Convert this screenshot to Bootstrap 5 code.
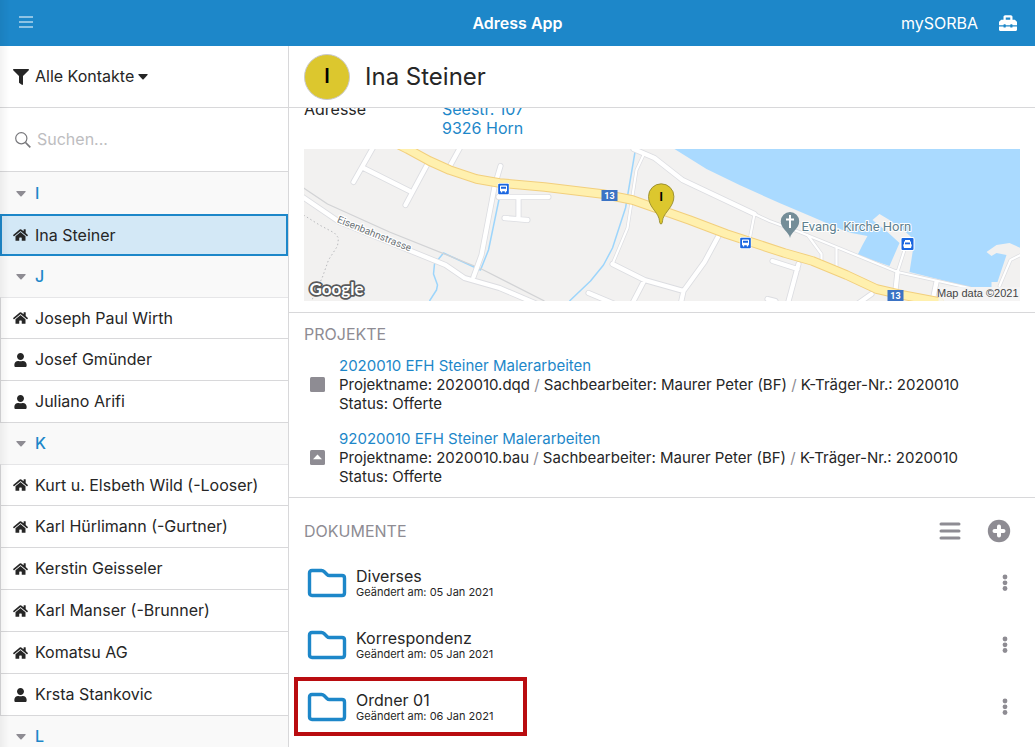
<!DOCTYPE html>
<html lang="de">
<head>
<meta charset="utf-8">
<meta name="viewport" content="width=device-width, initial-scale=1">
<title>Adress App</title>
<link href="https://cdn.jsdelivr.net/npm/bootstrap@5.3.0/dist/css/bootstrap.min.css" rel="stylesheet">
<style>
:root { --brand: #1d87c9; --ink: #262626; --muted: #8e8c93; --rule: #d8d8da; }
body { font-family: Inter, "Liberation Sans", sans-serif; font-size: 16px; line-height: 19px; color: var(--ink); background: #fff; }
a { color: var(--brand); text-decoration: none; }
svg { display: block; flex: none; }
button { color: inherit; }
.plain-btn { border: 0; background: none; padding: 0; }
.app-bar { height: 46px; background: var(--brand); color: #fff; padding: 0 17px; }
.app-bar h1 { font-size: 16px; line-height: 19px; font-weight: 600; }
.app-bar a { color: #fff; }
.app-side { flex: 1 1 0; }
.sidebar { flex: 0 0 289px; border-right: 1px solid var(--rule); }
.bar-row { height: 62px; border-bottom: 1px solid var(--rule); flex: none; }
.filter-row { padding: 0 13px; }
.filter-row button { gap: 6px; }
.filter-row svg { fill: var(--ink); }
.search-row { height: 64px; border-bottom: 1px solid var(--rule); padding: 0 15px; gap: 6px; flex: none; }
.search-row input { border: 0; padding: 0; font-size: 16px; line-height: 19px; box-shadow: none !important; background: none; }
.search-row input::placeholder { color: #bdbdc0; opacity: 1; }
.scroll { overflow-y: auto; scrollbar-width: none; }
.scroll::-webkit-scrollbar { display: none; }
.contacts { padding-top: 1px; background: #f9f9f9; }
.letter, .contact { width: 100%; display: flex; align-items: center; text-align: left; border: 0; }
.letter { height: 41px; background: #f9f9f9; color: var(--brand); font-weight: 500; padding: 0 16px; gap: 9px; }
.letter svg { fill: var(--muted); }
.contact { height: 42px; gap: 7px; background: #fff; border-bottom: 1px solid var(--rule); border-left: 1px solid var(--rule); padding: 0 12px; }
.contact svg { fill: var(--ink); }
.letter + .contact { border-top: 1px solid #e6e6e8; }
.letter + .contact.current { border: 2px solid var(--brand); background: #d3e8f6; padding: 0 11px; }
.edge-shade { position: fixed; inset: 0 auto 0 0; width: 9px; background: linear-gradient(90deg, rgba(0,0,0,.05), transparent); pointer-events: none; }
.person-bar { padding: 0 15px; gap: 15px; }
.avatar { width: 46px; height: 46px; border-radius: 50%; background: #dcc72e; border: 1px solid #c9c9cf; color: #000; font-size: 20px; font-weight: 600; }
.person { font-size: 24px; line-height: 30px; font-weight: 400; }
.section-title { font-size: 16px; line-height: 19px; font-weight: 400; color: var(--muted); margin: 0; }
.address { margin: -8px 0 11px; }
.address dt { width: 138px; font-weight: 400; }
.map { width: 100%; height: 152px; }
.panel { padding: 0 15px 11px; border-bottom: 1px solid var(--rule); }
.slash { color: var(--muted); }
.project { padding-left: 6px; gap: 14px; font-size: 15px; }
.docs { padding: 0 15px; }
.docs-head { padding: 21px 9px 9px 0; }
.doc { height: 62px; padding-right: 12px; }
.doc-name { gap: 9px; padding-left: 3px; }
.doc small { font-size: 11px; line-height: 13px; }
.doc-mark { position: absolute; left: -10px; top: 1px; width: 233px; height: 59px; border: 4px solid #b90c10; pointer-events: none; }
</style>
</head>
<body>
<svg width="0" height="0" class="position-absolute" aria-hidden="true">
  <symbol id="home" viewBox="0 0 576 512"><path d="M280.37 148.26L96 300.11V464a16 16 0 0 0 16 16l112.06-.29a16 16 0 0 0 15.92-16V368a16 16 0 0 1 16-16h64a16 16 0 0 1 16 16v95.64a16 16 0 0 0 16 16.05L464 480a16 16 0 0 0 16-16V300L295.67 148.26a12.19 12.19 0 0 0-15.3 0zM571.6 251.47L488 182.56V44.05a12 12 0 0 0-12-12h-56a12 12 0 0 0-12 12v72.61L318.47 43a48 48 0 0 0-61 0L4.34 251.47a12 12 0 0 0-1.6 16.9l25.5 31A12 12 0 0 0 45.15 301l235.22-193.74a12.19 12.19 0 0 1 15.3 0L530.9 301a12 12 0 0 0 16.9-1.6l25.5-31a12 12 0 0 0-1.7-16.93z"/></symbol>
  <symbol id="user" viewBox="0 0 448 512"><path d="M224 256c70.700 0 128-57.300 128-128S294.700 0 224 0 96 57.300 96 128s57.300 128 128 128zm89.600 32h-16.700c-22.200 10.200-46.900 16-72.900 16s-50.600-5.800-72.900-16h-16.700C60.200 288 0 348.200 0 422.400V464c0 26.500 21.500 48 48 48h352c26.500 0 48-21.500 48-48v-41.600c0-74.200-60.200-134.400-134.400-134.400z"/></symbol>
  <symbol id="down" viewBox="0 0 10 6"><path d="M.8 0h8.400q.8.300.3.900L5.600 5.200q-.6.600-1.200 0L.5.900Q0 .3.800 0z"/></symbol>
  <symbol id="folder" viewBox="0 0 40 30"><path d="M5 2.500h9.500q1.500 0 2.500 1l3 3q1 1 2.500 1H35q2.500 0 2.500 2.500v15q0 2.500-2.500 2.500H5q-2.500 0-2.500-2.500V5q0-2.500 2.500-2.500z" fill="none" stroke="#1d87c9" stroke-width="3.400"/></symbol>
  <symbol id="dots" viewBox="0 0 6 18"><circle cx="3" cy="3" r="2.400"/><circle cx="3" cy="8.800" r="2.400"/><circle cx="3" cy="14.500" r="2.400"/></symbol>
  <symbol id="bus" viewBox="0 0 12 12"><rect width="12" height="12" rx="1.500" fill="#fff"/><rect x=".7" y=".7" width="10.600" height="10.600" rx="1" fill="#1a66e0"/><path d="M3.300 2.500h5.400q.8 0 .8.800v5h-.9v1.300H7.300V8.300H4.700v1.300H3.400V8.300h-.9v-5q0-.8.800-.8z" fill="#fff"/><path d="M3.500 3.800h5v2h-5z" fill="#1a66e0"/></symbol>
</svg>

<div class="d-flex flex-column vh-100 overflow-hidden">
  <header class="app-bar d-flex align-items-center flex-shrink-0">
    <div class="app-side">
      <button class="plain-btn" type="button" aria-label="Menü"><svg width="18" height="14" viewBox="0 0 18 14" stroke="#fff" stroke-width="1.200"><path d="M2 2h14M2 7h14M2 12h14"/></svg></button>
    </div>
    <h1 class="m-0">Adress App</h1>
    <div class="app-side d-flex align-items-center justify-content-end gap-3">
      <a href="#">mySORBA</a>
      <a href="#" aria-label="Werkzeuge" class="ps-1"><svg width="20" height="18" viewBox="0 0 512 512" fill="#fff"><path d="M502.630 214.630l-45.250-45.250c-6-6-14.140-9.370-22.630-9.370H384V80c0-26.510-21.490-48-48-48H176c-26.510 0-48 21.490-48 48v80H77.250c-8.490 0-16.620 3.370-22.630 9.370L9.370 214.630c-6 6-9.370 14.140-9.370 22.630V320h128v-16c0-8.840 7.160-16 16-16h32c8.840 0 16 7.160 16 16v16h128v-16c0-8.840 7.160-16 16-16h32c8.840 0 16 7.160 16 16v16h128v-82.750c0-8.480-3.370-16.620-9.370-22.620zM320 160H192V96h128v64zm64 208c0 8.840-7.160 16-16 16h-32c-8.840 0-16-7.160-16-16v-16H192v16c0 8.840-7.160 16-16 16h-32c-8.840 0-16-7.160-16-16v-16H0v96c0 17.670 14.330 32 32 32h448c17.670 0 32-14.330 32-32v-96H384v16z"/></svg></a>
    </div>
  </header>

  <div class="d-flex flex-grow-1 overflow-hidden">
    <nav class="sidebar d-flex flex-column" aria-label="Kontakte">
      <div class="bar-row filter-row d-flex align-items-center">
        <button class="plain-btn d-flex align-items-center" type="button">
          <svg width="16" height="16" viewBox="0 0 512 512"><path d="M487.976 0H24.028C2.710 0-8.047 25.866 7.058 40.971L192 225.941V432c0 7.831 3.821 15.170 10.237 19.662l80 55.980C298.020 518.690 320 507.493 320 487.980V225.941l184.947-184.970C520.021 25.896 509.338 0 487.976 0z"/></svg>
          <span class="d-flex align-items-center gap-1">Alle Kontakte <svg width="10" height="6"><use href="#down"/></svg></span>
        </button>
      </div>
      <div class="search-row d-flex align-items-center">
        <label for="q"><svg width="16" height="16" viewBox="0 0 16 16" fill="none" stroke="#77777b"><title>Suchen</title><circle cx="6.300" cy="6.300" r="5.600" stroke-width="1.200"/><path d="M10.500 10.500l4.800 4.800" stroke-width="1.700"/></svg></label>
        <input id="q" type="search" class="form-control" placeholder="Suchen...">
      </div>
      <div class="contacts scroll flex-grow-1">
        <button class="letter" type="button"><svg width="10" height="6"><use href="#down"/></svg>I</button>
        <button class="contact current" type="button"><svg width="15" height="14"><use href="#home"/></svg>Ina Steiner</button>
        <button class="letter" type="button"><svg width="10" height="6"><use href="#down"/></svg>J</button>
        <button class="contact" type="button"><svg width="15" height="14"><use href="#home"/></svg>Joseph Paul Wirth</button>
        <button class="contact" type="button"><svg width="15" height="14"><use href="#user"/></svg>Josef Gmünder</button>
        <button class="contact" type="button"><svg width="15" height="14"><use href="#user"/></svg>Juliano Arifi</button>
        <button class="letter" type="button"><svg width="10" height="6"><use href="#down"/></svg>K</button>
        <button class="contact" type="button"><svg width="15" height="14"><use href="#home"/></svg>Kurt u. Elsbeth Wild (-Looser)</button>
        <button class="contact" type="button"><svg width="15" height="14"><use href="#home"/></svg>Karl Hürlimann (-Gurtner)</button>
        <button class="contact" type="button"><svg width="15" height="14"><use href="#home"/></svg>Kerstin Geisseler</button>
        <button class="contact" type="button"><svg width="15" height="14"><use href="#home"/></svg>Karl Manser (-Brunner)</button>
        <button class="contact" type="button"><svg width="15" height="14"><use href="#home"/></svg>Komatsu AG</button>
        <button class="contact" type="button"><svg width="15" height="14"><use href="#user"/></svg>Krsta Stankovic</button>
        <button class="letter" type="button"><svg width="10" height="6"><use href="#down"/></svg>L</button>
      </div>
    </nav>

    <main class="d-flex flex-column flex-grow-1 overflow-hidden">
      <div class="bar-row person-bar d-flex align-items-center">
        <div class="avatar d-flex align-items-center justify-content-center">I</div>
        <h2 class="person m-0">Ina Steiner</h2>
      </div>
      <div class="scroll flex-grow-1">
        <section class="panel">
          <dl class="address d-flex">
            <dt>Adresse</dt>
            <dd class="mb-0"><a href="#">Seestr. 107<br>9326 Horn</a></dd>
          </dl>
          <svg class="map" viewBox="304 149 717 152" preserveAspectRatio="xMidYMid slice" role="img" aria-label="Karte">
            <defs>
              <path id="streets" d="M375 145L354 182M364 168L410 191M428 164L406 205M462 145L451 165M501 166L496 183M495 187L482 255 474 277M499 197H549M519 198V217M505 218L528 220M296 192L340 222 446 265 465 278 500 288 540 305M634 149L655 158 683 180 755 214M719 236L705 262 684 291 681 305M613 264L645 280 684 291M645 280L632 305M589 293L620 306M773 261L798 269M799 264L788 305M898 272L896 290M937 282L933 301M872 294L855 306M768 299L776 301"/>
              <path id="lanes" d="M644 155L637 170 632 202 628 228 613 264M755 214L750 240M755 214L770 221 800 232 898 272 970 288M808 235L822 254V262M837 248V266M905 250L898 272M1021 255L1011 260 1000 286"/>
              <path id="main-road" d="M398 144L408 149 430 161 450 170 477 179 500 183 545 187 603 194 633 200 653 207 690 220 727 234 785 253 813 261 847 275 877 289 903 295 940 302"/>
            </defs>
            <rect x="0" y="100" width="1600" height="250" fill="#f2f1f0"/>
            <path fill="#aadaff" d="M675 149L707 169 740 185 780 203 813 217 843 230 852 233 868 236 863 245 858 255 890 266 900 243 888 232 873 220 880 214 890 220 905 231 915 240 910 272 970 287 992 287 992 282 998 282 1007 255 997 253 992 256 987 252 997 245 1010 243 1021 248V149z"/>
            <!-- streams, railway and footpath -->
            <g fill="none" stroke-linejoin="round">
              <path d="M636 149L626 208 613 248 604 265 591 281 570 301M500 197L489 250 481 270 444 253 435 264 434 274 438 285 437 290 430 301" stroke="#9dd5fb" stroke-width="1.500"/>
              <path d="M304 188L328 204 390 232 480 268 545 301" stroke="#d2d3d5" stroke-width="1.300"/>
              <path d="M304 215L320 225 335 233 339 238 338 246 329 260 323 277 312 301" stroke="#b9babd" stroke-dasharray="1.500 2.500"/>
            </g>
            <!-- each road: casing, then surface -->
            <g fill="none" stroke-linecap="round" stroke-linejoin="round">
              <use href="#streets" stroke="#dcdde1" stroke-width="6"/>
              <use href="#lanes" stroke="#dcdde1" stroke-width="3.600"/>
              <use href="#streets" stroke="#fff" stroke-width="4.300"/>
              <use href="#lanes" stroke="#fff" stroke-width="2.200"/>
              <use href="#main-road" stroke="#f2cf7d" stroke-width="9.600"/>
              <use href="#main-road" stroke="#fff0ae" stroke-width="7.600"/>
            </g>
            <g font-family="Roboto, sans-serif" paint-order="stroke" stroke-linejoin="round">
              <text transform="translate(337 222) rotate(22)" font-size="10" fill="#6d7477" stroke="#fff" stroke-width="2.500">Eisenbahnstrasse</text>
              <text x="802" y="231" font-size="13" fill="#5d7f8f" stroke="#fff" stroke-width="2">Evang. Kirche Horn</text>
              <g fill="#3b73c4"><rect x="602" y="190" width="16" height="11"/><rect x="888" y="290" width="16" height="11"/></g>
              <g fill="#fff" font-size="9" font-weight="700" text-anchor="middle"><text x="610" y="199">13</text><text x="896" y="299">13</text></g>
            </g>
            <use href="#bus" x="498" y="183" width="12" height="12"/>
            <use href="#bus" x="740" y="237" width="12" height="12"/>
            <g><rect x="901" y="237" width="14" height="14" rx="2" fill="#fff"/><rect x="902" y="238" width="12" height="12" rx="1" fill="#1a66e0"/><path d="M905.500 240h5v1.500h1v3h1l-1 3.500h-7l-1-3.500h1v-3h1z" fill="#fff"/><path d="M905.500 242.500h5v1.800h-5z" fill="#1a66e0"/></g>
            <path d="M790.500 238c-1-6-9.200-9-9.200-16.700a9.200 9.200 0 0 1 18.400 0c0 7.700-8.200 10.700-9.200 16.700z" fill="#748d98"/>
            <path d="M790.500 215v13M786.500 219.500h8" stroke="#fff" stroke-width="2"/>
            <path d="M661.500 224c-1.600 0-1.200-2.500-2-5.500-2.200-7.500-10.500-12-10.500-22a12.700 12.700 0 0 1 25.400 0c0 10-8.300 14.500-10.900 22-.8 3-.4 5.500-2 5.500z" fill="#dcc72e" stroke="#8d8226" stroke-width=".8"/>
            <text x="661.700" y="201" text-anchor="middle" font-size="12" font-weight="700" fill="#000">I</text>
            <text x="310" y="295" font-family="Lato, sans-serif" font-size="17" font-weight="700" fill="#fff" stroke="#58595b" stroke-width="3.500" paint-order="stroke" stroke-linejoin="round">Google</text>
            <rect x="939" y="287" width="82" height="14" fill="#f5f5f5" fill-opacity=".8"/>
            <text x="1019" y="297" text-anchor="end" font-family="Liberation Sans, sans-serif" font-size="11" fill="#444">Map data ©2021</text>
          </svg>
        </section>

        <section class="panel">
          <h3 class="section-title pt-2 mt-1 pb-2 mb-1">PROJEKTE</h3>
          <div class="project d-flex align-items-center mb-3">
            <svg width="15" height="15" viewBox="0 0 15 15"><rect width="15" height="15" rx="1.500" fill="#8e8c93"/></svg>
            <div><a href="#">2020010 EFH Steiner Malerarbeiten</a><br>Projektname: 2020010.dqd <span class="slash">/</span> Sachbearbeiter: Maurer Peter (BF) <span class="slash">/</span> K-Träger-Nr.: 2020010<br>Status: Offerte</div>
          </div>
          <div class="project d-flex align-items-center">
            <svg width="15" height="15" viewBox="0 0 15 15"><rect width="15" height="15" rx="1.500" fill="#8e8c93"/><path d="M7.500 4.500L12 9.200H3z" fill="#fff"/></svg>
            <div><a href="#">92020010 EFH Steiner Malerarbeiten</a><br>Projektname: 2020010.bau <span class="slash">/</span> Sachbearbeiter: Maurer Peter (BF) <span class="slash">/</span> K-Träger-Nr.: 2020010<br>Status: Offerte</div>
          </div>
        </section>

        <section class="docs">
          <div class="docs-head d-flex align-items-center">
            <h3 class="section-title flex-grow-1">DOKUMENTE</h3>
            <button class="plain-btn me-4" type="button" aria-label="Liste"><svg width="24" height="20" viewBox="0 0 24 20" stroke="#8e8c93" stroke-width="3" stroke-linecap="round"><path d="M2 3h18M2 10h18M2 17h18"/></svg></button>
            <button class="plain-btn" type="button" aria-label="Hinzufügen"><svg width="24" height="24" viewBox="0 0 24 24"><circle cx="12" cy="12" r="11.200" fill="#8e8c93"/><path d="M12 7.500v9M7.500 12h9" stroke="#fff" stroke-width="4" stroke-linecap="round"/></svg></button>
          </div>
          <div class="doc d-flex align-items-center justify-content-between">
            <a href="#" class="doc-name d-flex align-items-center text-reset"><svg width="40" height="30"><use href="#folder"/></svg><span>Diverses<small class="d-block">Geändert am: 05 Jan 2021</small></span></a>
            <button class="plain-btn" type="button" aria-label="Optionen"><svg width="6" height="18" fill="#8e8c93"><use href="#dots"/></svg></button>
          </div>
          <div class="doc d-flex align-items-center justify-content-between">
            <a href="#" class="doc-name d-flex align-items-center text-reset"><svg width="40" height="30"><use href="#folder"/></svg><span>Korrespondenz<small class="d-block">Geändert am: 05 Jan 2021</small></span></a>
            <button class="plain-btn" type="button" aria-label="Optionen"><svg width="6" height="18" fill="#8e8c93"><use href="#dots"/></svg></button>
          </div>
          <div class="doc d-flex align-items-center justify-content-between position-relative">
            <a href="#" class="doc-name d-flex align-items-center text-reset"><svg width="40" height="30"><use href="#folder"/></svg><span>Ordner 01<small class="d-block">Geändert am: 06 Jan 2021</small></span></a>
            <button class="plain-btn" type="button" aria-label="Optionen"><svg width="6" height="18" fill="#8e8c93"><use href="#dots"/></svg></button>
            <div class="doc-mark"></div>
          </div>
        </section>
      </div>
    </main>
  </div>
</div>
<div class="edge-shade"></div>
<script src="https://cdn.jsdelivr.net/npm/bootstrap@5.3.0/dist/js/bootstrap.bundle.min.js"></script>
</body>
</html>
